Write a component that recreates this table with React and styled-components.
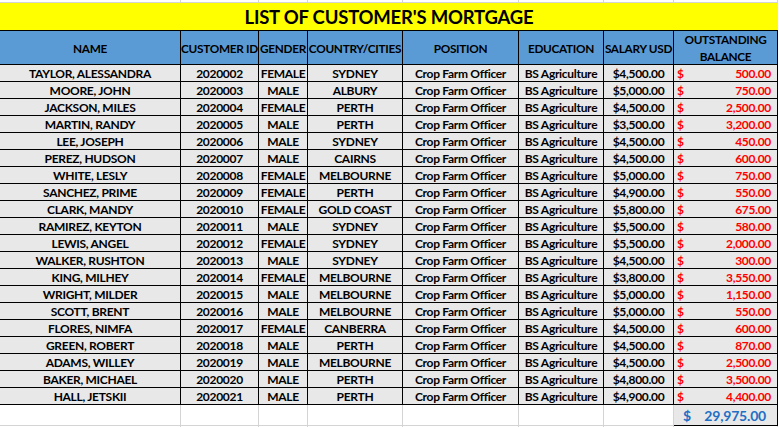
import React from 'react'
import styled, { createGlobalStyle, css } from 'styled-components'

const GlobalStyle = createGlobalStyle`
  html, body {
    margin: 0;
    padding: 0;
    background: #ffffff;
  }
  body {
    font-family: Lato, "Liberation Sans", sans-serif;
    color: #000000;
  }
`

const COLS = '181px 78px 49px 95px 116px 85px 70px 104px'

const customers = [
  ['TAYLOR, ALESSANDRA', '2020002', 'FEMALE', 'SYDNEY', '$4,500.00', '500.00'],
  ['MOORE, JOHN', '2020003', 'MALE', 'ALBURY', '$5,000.00', '750.00'],
  ['JACKSON, MILES', '2020004', 'FEMALE', 'PERTH', '$4,500.00', '2,500.00'],
  ['MARTIN, RANDY', '2020005', 'MALE', 'PERTH', '$3,500.00', '3,200.00'],
  ['LEE, JOSEPH', '2020006', 'MALE', 'SYDNEY', '$4,500.00', '450.00'],
  ['PEREZ, HUDSON', '2020007', 'MALE', 'CAIRNS', '$4,500.00', '600.00'],
  ['WHITE, LESLY', '2020008', 'FEMALE', 'MELBOURNE', '$5,000.00', '750.00'],
  ['SANCHEZ, PRIME', '2020009', 'FEMALE', 'PERTH', '$4,900.00', '550.00'],
  ['CLARK, MANDY', '2020010', 'FEMALE', 'GOLD COAST', '$5,800.00', '675.00'],
  ['RAMIREZ, KEYTON', '2020011', 'MALE', 'SYDNEY', '$5,500.00', '580.00'],
  ['LEWIS, ANGEL', '2020012', 'FEMALE', 'SYDNEY', '$5,500.00', '2,000.00'],
  ['WALKER, RUSHTON', '2020013', 'MALE', 'SYDNEY', '$4,500.00', '300.00'],
  ['KING, MILHEY', '2020014', 'FEMALE', 'MELBOURNE', '$3,800.00', '3,550.00'],
  ['WRIGHT, MILDER', '2020015', 'MALE', 'MELBOURNE', '$5,000.00', '1,150.00'],
  ['SCOTT, BRENT', '2020016', 'MALE', 'MELBOURNE', '$5,000.00', '550.00'],
  ['FLORES, NIMFA', '2020017', 'FEMALE', 'CANBERRA', '$4,500.00', '600.00'],
  ['GREEN, ROBERT', '2020018', 'MALE', 'PERTH', '$4,500.00', '870.00'],
  ['ADAMS, WILLEY', '2020019', 'MALE', 'MELBOURNE', '$4,500.00', '2,500.00'],
  ['BAKER, MICHAEL', '2020020', 'MALE', 'PERTH', '$4,800.00', '3,500.00'],
  ['HALL, JETSKII', '2020021', 'MALE', 'PERTH', '$4,900.00', '4,400.00'],
]

const Sheet = styled.div`
  width: 779px;
  height: 427px;
  overflow: hidden;
  background: #ffffff;
`

const Row = styled.div`
  display: grid;
  grid-template-columns: ${COLS};
  height: ${p => p.h}px;
`

const GridCell = styled.div`
  box-sizing: border-box;
  border-right: 1px solid #d4d4d4;
  border-bottom: 1px solid #d4d4d4;
`

const Title = styled.div`
  box-sizing: border-box;
  height: 28px;
  width: 778px;
  background: #ffff00;
  border-bottom: 1px solid #000;
  display: flex;
  align-items: center;
  justify-content: center;
  font-size: 18.5px;
  font-weight: 700;
  letter-spacing: -0.2px;
  color: #000;
  padding-top: 1px;
`

const Cell = styled.div`
  box-sizing: border-box;
  border-right: 1px solid #000;
  border-bottom: 1px solid #000;
  background: ${p => (p.head ? '#5b9bd5' : '#e8e8e8')};
  font-size: 12px;
  font-weight: 700;
  letter-spacing: -0.3px;
  line-height: 16px;
  white-space: nowrap;
  overflow: hidden;
  display: flex;
  align-items: center;
  justify-content: center;
  text-align: center;
  padding-top: 1px;
  ${p => p.head && css`
    line-height: 17px;
    font-size: 11.8px;
  `}
  ${p => p.wrap && css`
    white-space: normal;
  `}
`

const Money = styled(Cell)`
  justify-content: space-between;
  color: #ff0000;
  padding: 1px 6px 0 3px;
  ${p => p.total && css`
    color: #1f6fc5;
    font-size: 14px;
    letter-spacing: -0.2px;
    padding: 1px 11px 0 9px;
    background: #e8e8e8;
  `}
`

const App = () => {
  return (
    <Sheet>
      <GlobalStyle />
      <Row h={3}>
        {Array.from({ length: 8 }).map((_, i) => <GridCell key={i} />)}
      </Row>
      <Title>LIST OF CUSTOMER'S MORTGAGE</Title>
      <Row h={34}>
        <Cell head>NAME</Cell>
        <Cell head>CUSTOMER ID</Cell>
        <Cell head>GENDER</Cell>
        <Cell head>COUNTRY/CITIES</Cell>
        <Cell head>POSITION</Cell>
        <Cell head>EDUCATION</Cell>
        <Cell head>SALARY USD</Cell>
        <Cell head wrap>OUTSTANDING BALANCE</Cell>
      </Row>
      {customers.map(([name, id, gender, city, salary, balance]) => (
        <Row h={17} key={id}>
          <Cell>{name}</Cell>
          <Cell>{id}</Cell>
          <Cell>{gender}</Cell>
          <Cell>{city}</Cell>
          <Cell>Crop Farm Officer</Cell>
          <Cell>BS Agriculture</Cell>
          <Cell>{salary}</Cell>
          <Money>
            <span>$</span>
            <span>{balance}</span>
          </Money>
        </Row>
      ))}
      <Row h={21}>
        {Array.from({ length: 7 }).map((_, i) => <GridCell key={i} />)}
        <Money total>
          <span>$</span>
          <span>29,975.00</span>
        </Money>
      </Row>
      <Row h={6}>
        {Array.from({ length: 8 }).map((_, i) => <GridCell key={i} />)}
      </Row>
    </Sheet>
  )
}

export default App
